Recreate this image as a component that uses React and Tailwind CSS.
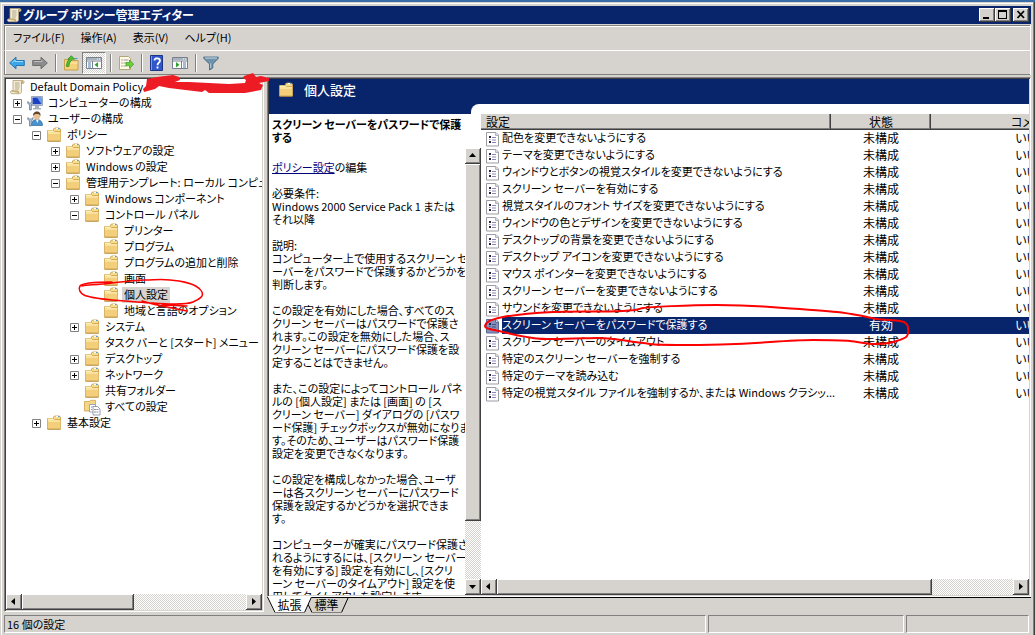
import clsx from "clsx"

const RAISED =
  "bg-[#d6d3ce] shadow-[inset_-1px_-1px_0_#404040,inset_1px_1px_0_#fff,inset_-2px_-2px_0_#808080]"
const SUNKEN =
  "border border-t-[#808080] border-l-[#808080] border-r-white border-b-white p-px shadow-[inset_1px_1px_0_#404040,inset_-1px_-1px_0_#d6d3ce]"
const TRACK = "bg-[repeating-conic-gradient(#fff_0_25%,#d6d3ce_0_50%)] bg-[length:2px_2px]"

const TREE = [
  { label: "Default Domain Policy", depth: 0, icon: "scroll" },
  { label: "コンピューターの構成", depth: 1, icon: "computer", box: "+" },
  { label: "ユーザーの構成", depth: 1, icon: "user", box: "-" },
  { label: "ポリシー", depth: 2, box: "-" },
  { label: "ソフトウェアの設定", depth: 3, box: "+" },
  { label: "Windows の設定", depth: 3, box: "+" },
  { label: "管理用テンプレート: ローカル コンピューター", depth: 3, box: "-" },
  { label: "Windows コンポーネント", depth: 4, box: "+" },
  { label: "コントロール パネル", depth: 4, box: "-" },
  { label: "プリンター", depth: 5 },
  { label: "プログラム", depth: 5 },
  { label: "プログラムの追加と削除", depth: 5 },
  { label: "画面", depth: 5 },
  { label: "個人設定", depth: 5, selected: true },
  { label: "地域と言語のオプション", depth: 5 },
  { label: "システム", depth: 4, box: "+" },
  { label: "タスク バーと [スタート] メニュー", depth: 4 },
  { label: "デスクトップ", depth: 4, box: "+" },
  { label: "ネットワーク", depth: 4, box: "+" },
  { label: "共有フォルダー", depth: 4 },
  { label: "すべての設定", depth: 4, icon: "all" },
  { label: "基本設定", depth: 2, box: "+" },
]

const SETTINGS = [
  ["配色を変更できないようにする", "未構成"],
  ["テーマを変更できないようにする", "未構成"],
  ["ウィンドウとボタンの視覚スタイルを変更できないようにする", "未構成"],
  ["スクリーン セーバーを有効にする", "未構成"],
  ["視覚スタイルのフォント サイズを変更できないようにする", "未構成"],
  ["ウィンドウの色とデザインを変更できないようにする", "未構成"],
  ["デスクトップの背景を変更できないようにする", "未構成"],
  ["デスクトップ アイコンを変更できないようにする", "未構成"],
  ["マウス ポインターを変更できないようにする", "未構成"],
  ["スクリーン セーバーを変更できないようにする", "未構成"],
  ["サウンドを変更できないようにする", "未構成"],
  ["スクリーン セーバーをパスワードで保護する", "有効"],
  ["スクリーン セーバーのタイムアウト", "未構成"],
  ["特定のスクリーン セーバーを強制する", "未構成"],
  ["特定のテーマを読み込む", "未構成"],
  ["特定の視覚スタイル ファイルを強制するか、または Windows クラシッ...", "未構成"],
]

const DESCRIPTION = [
  ["必要条件:", "Windows 2000 Service Pack 1 または", "それ以降"],
  ["説明:", "コンピューター上で使用するスクリーン セ", "ーバーをパスワードで保護するかどうかを", "判断します。"],
  [
    "この設定を有効にした場合、すべてのス",
    "クリーン セーバーはパスワードで保護さ",
    "れます。この設定を無効にした場合、ス",
    "クリーン セーバーにパスワード保護を設",
    "定することはできません。",
  ],
  [
    "また、この設定によってコントロール パネ",
    "ルの [個人設定] または [画面] の [ス",
    "クリーン セーバー] ダイアログの [パスワ",
    "ード保護] チェックボックスが無効になりま",
    "す。そのため、ユーザーはパスワード保護",
    "設定を変更できなくなります。",
  ],
  ["この設定を構成しなかった場合、ユーザ", "ーは各スクリーン セーバーにパスワード", "保護を設定するかどうかを選択できま", "す。"],
  [
    "コンピューターが確実にパスワード保護さ",
    "れるようにするには、[スクリーン セーバー",
    "を有効にする] 設定を有効にし、[スクリ",
    "ーン セーバーのタイムアウト] 設定を使",
    "用してタイムアウトを設定します。",
  ],
]

function Svg({ children, className }) {
  return (
    <svg width="16" height="16" viewBox="0 0 16 16" aria-hidden="true" className={clsx("shrink-0", className)}>
      {children}
    </svg>
  )
}

function FolderShape() {
  return (
    <>
      <path d="M7.5 3.5V2l1-1h4.500l1.500 1v3h-7z" fill="#f6dc8c" stroke="#c39a45" strokeWidth=".8" />
      <path d="M10 1.600h2" stroke="#fff" />
      <path d="M12 1.600h1.500" stroke="#4a9ad8" />
      <path d="M1.500 3.500h6l1 1h6v9.500h-13z" fill="#fbe29c" stroke="#cfa550" strokeWidth=".8" />
      <path d="M2 7h12.200v6.700H2z" fill="#f3cf7b" />
      <path d="M2 4.200h5.500" stroke="#fff3c6" />
      <path d="M1.500 14.200h13" stroke="#b98d3c" />
    </>
  )
}

function ScrollIcon() {
  return (
    <Svg>
      <path d="M4 1.500h9.500c2 0 2 3 .5 3h-1.500v8c0 1.500-1 2.200-2 2.200H3c-2 0-2.200-2.700-.5-2.700H4z" fill="#f3ecd2" stroke="#b0a078" strokeWidth=".8" />
      <path d="M12.500 4.500V3c0-1 2-1 1.800.5M2.500 12H9c.8.8.8 2 0 2.600" fill="#d9c48c" stroke="#a78e55" strokeWidth=".8" />
      <path d="M6 4h4.500M6 6h4.500M6 8h4.500M6 10h4" stroke="#a9a286" strokeWidth=".9" />
    </Svg>
  )
}

function Wrench() {
  return (
    <path d="M.8 6.500v2l1.700 1.200V15h1.800V9.700L6 8.500v-2L4.500 8h-2z" fill="#b9c9d8" stroke="#51708e" strokeWidth=".7" />
  )
}

function TreeIcon({ name }) {
  if (name === "scroll") return <ScrollIcon />
  if (name === "computer")
    return (
      <Svg>
        <path d="M4.500 1.500h11v9h-11z" fill="#dce3ec" stroke="#8796a8" strokeWidth=".8" />
        <path d="M5.500 2.500h9v6.800h-9z" fill="#1d3fc4" />
        <path d="M10 2.500h4.500v6.800z" fill="#6ba0f2" />
        <path d="M8 11h4v2H8zM6 13h8v1.500H6z" fill="#a7b1bd" />
        <Wrench />
      </Svg>
    )
  if (name === "user")
    return (
      <Svg>
        <path d="M4.500 14.500c0-4 2-6 5.500-6s5.500 2.500 5.500 6z" fill="#4b93cf" stroke="#2c6798" strokeWidth=".7" />
        <path d="M9 8.500l1.300 3.500 1.400-3.500z" fill="#fff" />
        <circle cx="9.800" cy="5" r="3.400" fill="#e9bf95" />
        <path d="M6.200 5c-.5-3 1.500-4.500 3.800-4.500S14 2 13.400 5c-1-1.800-2-2-3.600-2S7 3.500 6.200 5z" fill="#60452d" />
        <Wrench />
      </Svg>
    )
  if (name === "all")
    return (
      <Svg className="overflow-visible">
        <path d="M.5 2.500h5l1-1.200h5V12H.5z" fill="#f5d587" stroke="#cfa550" strokeWidth=".8" />
        <path d="M5.500 5.500h6V13h-6z" fill="#fff" stroke="#8a94a6" strokeWidth=".8" />
        <path d="M9 7.500h4.500L16 10v6H9z" fill="#fff" stroke="#7e8799" strokeWidth=".8" />
        <path d="M10.500 10.500h1M10.500 13h1" stroke="#223" />
        <path d="M12.300 10.500h2.200M12.300 13h2.200M7 8h1.500M7 10.500h1" stroke="#8f93bd" />
      </Svg>
    )
  return (
    <Svg>
      <FolderShape />
    </Svg>
  )
}

function PolicyIcon({ selected }) {
  return (
    <Svg>
      <path
        d="M.5 1.500h9.500l2.500 2.500v11H.5z"
        fill={selected ? "#8490b6" : "#fff"}
        stroke={selected ? "#5a6a9c" : "#9b9ba3"}
      />
      <path d="M9.500 1.500v3h3" fill="#d8d8dc" stroke={selected ? "#5a6a9c" : "#b4b4ba"} />
      <path d="M3 5h2v2H3zM3 10h2v2H3z" fill={selected ? "#08246b" : "#2a2438"} />
      <path d="M6 6.500h4M6 9h4M6 11.500h4M3 8.500h1.500" stroke={selected ? "#40508c" : "#8c86b8"} />
    </Svg>
  )
}

function Arrow({ dir, className }) {
  const points = { left: "9,4 9,11 5,7.5", right: "6,4 6,11 10,7.5", up: "4,9 11,9 7.500,5", down: "4,6 11,6 7.500,10" }
  return (
    <button type="button" aria-label={dir} className={clsx("size-4 shrink-0", RAISED, className)}>
      <svg width="16" height="16" viewBox="0 0 16 16" aria-hidden="true">
        <polygon points={points[dir]} fill="#000" />
      </svg>
    </button>
  )
}

function TitleBar() {
  return (
    <header className="flex h-[18px] shrink-0 items-center bg-[#08246b] px-0.5 text-white">
      <ScrollIcon />
      <h1 className="ml-px flex-1 text-xs font-bold">グループ ポリシー管理エディター</h1>
      <button type="button" aria-label="最小化" className={clsx("h-3.5 w-4", RAISED)}>
        <svg width="16" height="14" viewBox="0 0 16 14"><path d="M4 9h6v2H4z" /></svg>
      </button>
      <button type="button" aria-label="最大化" className={clsx("h-3.5 w-4", RAISED)}>
        <svg width="16" height="14" viewBox="0 0 16 14"><path d="M3 2h9v9H3zM4 4v6h7V4z" fillRule="evenodd" /></svg>
      </button>
      <button type="button" aria-label="閉じる" className={clsx("ml-0.5 h-3.5 w-4", RAISED)}>
        <svg width="16" height="14" viewBox="0 0 16 14"><path d="M4.500 3l6.500 7M11 3l-6.500 7" stroke="#000" strokeWidth="1.800" /></svg>
      </button>
    </header>
  )
}

function MenuBar() {
  return (
    <nav className="flex h-[25px] shrink-0 items-center gap-4 border-t border-l border-[#808080] pb-px pl-2 shadow-[inset_1px_1px_0_#fff]">
      <button type="button">ファイル(F)</button>
      <button type="button">操作(A)</button>
      <button type="button">表示(V)</button>
      <button type="button">ヘルプ(H)</button>
    </nav>
  )
}

function Separator() {
  return <span className="mr-0.5 ml-1 h-[18px] w-0.5 shrink-0 border-l border-[#808080] bg-white" />
}

function ToolButton({ label, pressed, children }) {
  return (
    <button
      type="button"
      aria-label={label}
      className={clsx(
        "flex h-[22px] items-center justify-center",
        pressed ? "w-6 border border-t-[#808080] border-r-white border-b-white border-l-[#808080]" : "w-[23px]",
        pressed && TRACK
      )}
    >
      {children}
    </button>
  )
}

function PaneIcon({ flip }) {
  return (
    <Svg>
      <path d="M.5 2.500h15v11H.5z" fill="#fff" stroke="#77808c" />
      <path d="M1 3h14v2H1z" fill="#a9b3c0" />
      <path d="M11 4h1M13 4h1" stroke="#fff" />
      <path d="M1 6h14" stroke="#77808c" />
      {flip ? (
        <>
          <path d="M9.500 6v7" stroke="#77808c" />
          <path d="M4 7v5.500L7.500 9.700z" fill="#2fa12f" />
          <path d="M11 8h3M11 10h3M11 12h3" stroke="#4c78ad" />
        </>
      ) : (
        <>
          <path d="M6.500 6v7" stroke="#77808c" />
          <path d="M12 7v5.500L8.500 9.700z" fill="#2fa12f" />
          <path d="M2 8h3M2 10h3M2 12h3" stroke="#4c78ad" />
        </>
      )}
    </Svg>
  )
}

function Toolbar() {
  return (
    <div className="flex h-[25px] shrink-0 items-center border-t border-b border-l border-t-white border-b-[#808080] border-l-[#808080] shadow-[inset_1px_0_0_#fff]">
      <ToolButton label="戻る">
        <Svg>
          <path d="M.7 8L7 2.200V5.500h8.300v5H7v3.300z" fill="#3aa5e8" stroke="#1b6db0" strokeWidth=".9" />
          <path d="M3 7.600l3-2.700v1.600h8" fill="none" stroke="#9fdcfb" />
        </Svg>
      </ToolButton>
      <ToolButton label="進む">
        <Svg>
          <path d="M15.300 8L9 2.200V5.500H.7v5H9v3.300z" fill="#8d8d8d" stroke="#666" strokeWidth=".9" />
          <path d="M2 6.500h8V5" fill="none" stroke="#bdbdbd" />
        </Svg>
      </ToolButton>
      <Separator />
      <ToolButton label="上へ">
        <Svg>
          <path d="M1.500 4.500H6l1 1h8v9.500H1.500z" fill="#f5d27a" stroke="#c59a42" strokeWidth=".9" />
          <path d="M2 8h12.500" stroke="#fdebb2" />
          <path d="M12 3.500h2.500" stroke="#4a9ad8" />
          <path d="M3.500 11.500c0-3.500.8-6 3-7.300H4.800L8.300.7l3.500 3.500H9.600C7.400 5.800 6.300 8 5.800 11.500z" fill="#4fbf2f" stroke="#2c8a1c" strokeWidth=".7" />
        </Svg>
      </ToolButton>
      <ToolButton label="コンソール ツリーの表示" pressed>
        <PaneIcon />
      </ToolButton>
      <Separator />
      <ToolButton label="一覧のエクスポート">
        <Svg>
          <path d="M1.500 1.500h9l2 2v11h-11z" fill="#fffbe6" stroke="#b1a878" />
          <path d="M3.500 5h1M3.500 8h1M3.500 11h1" stroke="#555" />
          <path d="M5.500 5h5M5.500 8h3M5.500 11h3" stroke="#9a9a9a" />
          <path d="M8 7.500h3.500V5l4.200 4.200-4.200 4.200v-2.600H8z" fill="#6bce3c" stroke="#3b9a20" strokeWidth=".7" />
        </Svg>
      </ToolButton>
      <Separator />
      <ToolButton label="ヘルプ">
        <Svg>
          <path d="M1.500.5h12v15h-12z" fill="#2f57c9" stroke="#1d3588" />
          <path d="M2.500 1v14" stroke="#7d9bea" />
          <path d="M5.500 5.500C5.500 2.500 11 2.500 11 5.700 11 7.600 8.500 7.700 8.500 10.200M8.500 11.500v2" fill="none" stroke="#fff" strokeWidth="1.800" />
        </Svg>
      </ToolButton>
      <ToolButton label="操作ウィンドウの表示">
        <PaneIcon flip />
      </ToolButton>
      <Separator />
      <ToolButton label="フィルター">
        <Svg>
          <path d="M.8 2h14.400v1.500L9.800 9v4L6.500 15V9L.8 3.500z" fill="#6f93ad" stroke="#3f617b" strokeWidth=".8" />
          <path d="M2 3h12" stroke="#c8dcea" />
          <path d="M7.700 8.500V13" stroke="#b7d0e0" />
        </Svg>
      </ToolButton>
    </div>
  )
}

function TreeRow({ label, depth, icon, box, selected }) {
  // root sits flush left, every other level steps by 19px
  const indent = depth === 0 ? 3 : 7 + (depth - 1) * 19
  return (
    <li className="flex h-4 items-center" style={{ paddingLeft: indent }}>
      {depth > 0 && (
        <span className="mr-[5px] flex size-[9px] shrink-0 items-center justify-center">
          {box && (
            <svg width="9" height="9" viewBox="0 0 9 9" aria-hidden="true">
              <path d="M.5.5h8v8h-8z" fill="#fff" stroke="#808080" />
              <path d={box === "+" ? "M2 4.500h5M4.500 2v5" : "M2 4.500h5"} stroke="#000" />
            </svg>
          )}
        </span>
      )}
      <TreeIcon name={icon} />
      <span className={clsx("ml-[3px] px-0.5 pb-0.5 leading-[14px]", selected && "bg-[#d6d3ce]")}>{label}</span>
    </li>
  )
}

function TreePane() {
  return (
    <aside className={clsx("mb-px flex w-[260px] shrink-0 flex-col bg-white", SUNKEN)}>
      <ul className="min-h-0 flex-1 overflow-hidden">
        {TREE.map((node) => (
          <TreeRow key={node.label} {...node} />
        ))}
      </ul>
      <div className={clsx("flex h-4 shrink-0", TRACK)}>
        <Arrow dir="left" />
        <div className={clsx("w-28", RAISED)} />
        <Arrow dir="right" className="ml-auto" />
      </div>
    </aside>
  )
}

function Description() {
  return (
    <section className="flex w-[212px] shrink-0 flex-col pt-1 leading-[13px]">
      <h3 className="mb-1 pl-[3px] font-bold">
        スクリーン セーバーをパスワードで保護
        <br />
        する
      </h3>
      <div className="flex min-h-0 flex-1">
        <div className="flex min-w-0 flex-1 flex-col gap-[13px] overflow-hidden pt-[13px] pl-[3px]">
          <p>
            <a href="#edit" className="text-[#00007b] underline">ポリシー設定</a>の編集
          </p>
          {DESCRIPTION.map((lines) => (
            <p key={lines[0]}>
              {lines.map((line) => (
                <span key={line} className="block">{line}</span>
              ))}
            </p>
          ))}
        </div>
        <div className={clsx("flex w-4 shrink-0 flex-col", TRACK)}>
          <Arrow dir="up" />
          <div className={clsx("h-[357px]", RAISED)} />
          <Arrow dir="down" className="mt-auto" />
        </div>
      </div>
    </section>
  )
}

function SettingsList() {
  const th =
    "h-4 bg-[#d6d3ce] p-0 text-xs leading-4 font-normal shadow-[inset_-1px_-1px_0_#404040,inset_-2px_-2px_0_#808080]"
  return (
    <section className="flex min-w-0 flex-1 flex-col">
      <div className="min-h-0 flex-1 overflow-hidden">
        <table className="w-[652px] table-fixed border-collapse">
          <colgroup>
            <col className="w-[350px]" />
            <col className="w-[100px]" />
            <col />
          </colgroup>
          <thead>
            <tr>
              <th className={clsx(th, "pl-[5px] text-left")}>設定</th>
              <th className={th}>状態</th>
              <th className={th}>コメント</th>
            </tr>
          </thead>
          <tbody>
            {SETTINGS.map(([name, state]) => {
              const selected = state === "有効"
              const cell = clsx("p-0 pb-px text-center text-xs leading-[14px]", selected && "bg-[#08246b] text-white")
              return (
                <tr key={name} className="h-[17px]">
                  <td className="p-0">
                    <div className="flex h-[17px] items-center pl-[5px]">
                      <PolicyIcon selected={selected} />
                      <span className={clsx("h-full flex-1 leading-[14px]", selected && "bg-[#08246b] text-white")}>{name}</span>
                    </div>
                  </td>
                  <td className={cell}>{state}</td>
                  <td className={cell}>いいえ</td>
                </tr>
              )
            })}
          </tbody>
        </table>
      </div>
      <div className={clsx("flex h-4 shrink-0", TRACK)}>
        <Arrow dir="left" />
        <div className={clsx("w-[435px]", RAISED)} />
        <Arrow dir="right" className="ml-auto" />
      </div>
    </section>
  )
}

function Tab({ label, active }) {
  return (
    <button type="button" className={clsx("relative -mt-px h-4 w-[45px] text-xs", active ? "z-10" : "-ml-2")}>
      <svg className="absolute inset-0" width="45" height="16" viewBox="0 0 45 16" aria-hidden="true">
        <path d="M0 0L7.500 15.500h30L45 0z" fill={active ? "#fff" : "#d6d3ce"} />
        <path d="M.5 0L8 15.500M37.500 15.500L44.500 0" stroke="#000" fill="none" />
        <path d="M8 15.500h29.500" stroke="#808080" />
        {!active && <path d="M0 .5h45" stroke="#000" />}
      </svg>
      <span className="relative leading-4">{label}</span>
    </button>
  )
}

function DetailPane() {
  return (
    <main className="flex min-w-0 flex-1 flex-col">
      <div className={clsx("flex min-h-0 flex-1 flex-col bg-white", SUNKEN)}>
        <div className="flex h-[25px] shrink-0 items-center gap-2.5 bg-[#08246b] pb-1 pl-[9px] text-white">
          <TreeIcon />
          <h2 className="text-[13px] leading-4 font-medium">個人設定</h2>
        </div>
        <div className="flex h-2.5 shrink-0 bg-[#08246b] pl-[202px]">
          <div className="flex-1 rounded-tl-lg bg-white" />
        </div>
        <div className="flex min-h-0 flex-1">
          <Description />
          <SettingsList />
        </div>
      </div>
      <div className="flex h-4 shrink-0 border-t border-black">
        <Tab label="拡張" active />
        <Tab label="標準" />
      </div>
    </main>
  )
}

function StatusBar() {
  const cell = "h-[18px] border border-t-[#808080] border-r-white border-b-white border-l-[#808080]"
  return (
    <footer className="mt-0.5 mb-0.5 flex shrink-0 gap-0.5">
      <div className={clsx(cell, "flex-1 pl-0.5 leading-4")}>16 個の設定</div>
      <div className={clsx(cell, "w-[196px]")} />
      <div className={clsx(cell, "mr-0.5 w-[123px]")} />
    </footer>
  )
}

// hand drawn marks laid over the window
function RedMarks() {
  return (
    <svg className="pointer-events-none absolute inset-0 z-20 h-full w-full" fill="none" stroke="#f00" strokeLinecap="round" aria-hidden="true">
      <path
        d="M147 77l10-2 16-2 6 2 1 3-5 2 14 0 20 1 20 1 16-1 1-3-3-2 1-2 9-3 3 4 5-1 8 2v3l-10 2 4 2-2 5-16 3-36 0-4-3-3 2-33-4-10-2-4 3-11 3-1-3 3-3z"
        fill="#ed1c24"
        stroke="none"
      />
      <path
        d="M112 280C100 280 82 281 80 284s0 7 4 9 18 4 28 5 27 2 40 3 34 2 41-1 11-6 9-10-6-8-23-11-23-1-34-1-33 3-43 4-15 1-20 2M142 299q10 3 20 5t25 5M162 303l25 1"
        strokeWidth="1.500"
      />
      <path
        d="M485 324c1-4 4-6 18-9 16-3 32-4 50-5s50 0 70-1 14-2 20-3 45-3 74-3 38 1 53 2 50 3 67 5 12 2 20 3 12 3 20 4 17 1 23 2 8 4 8 7 1 5-1 8-7 4-14 6-12 2-18 2-16-2-25-3-24-1-37-1-28 1-43 2-60 3-93 3-24-1-34-2-20-3-30-4-10-1-16-1-29 1-44 1-14 0-20-1-18-3-30-6-18-3-18-6z"
        strokeWidth="2"
      />
    </svg>
  )
}

export default function App() {
  return (
    <div className="relative flex h-screen flex-col overflow-hidden border-t-2 border-[#396da5] bg-[#d6d3ce] px-1 pt-1 font-['Noto_Sans_CJK_JP',sans-serif] text-[11px] whitespace-nowrap text-black shadow-[inset_-1px_0_0_#404040,inset_-2px_0_0_#808080,inset_1px_1px_0_#d6d3ce,inset_2px_2px_0_#fff] [font-feature-settings:'palt']">
      <TitleBar />
      <div className="mt-px mb-0.5 border-r border-white">
        <MenuBar />
        <Toolbar />
      </div>
      <div className="flex min-h-0 flex-1 gap-[3px]">
        <TreePane />
        <DetailPane />
      </div>
      <StatusBar />
      <RedMarks />
    </div>
  )
}
